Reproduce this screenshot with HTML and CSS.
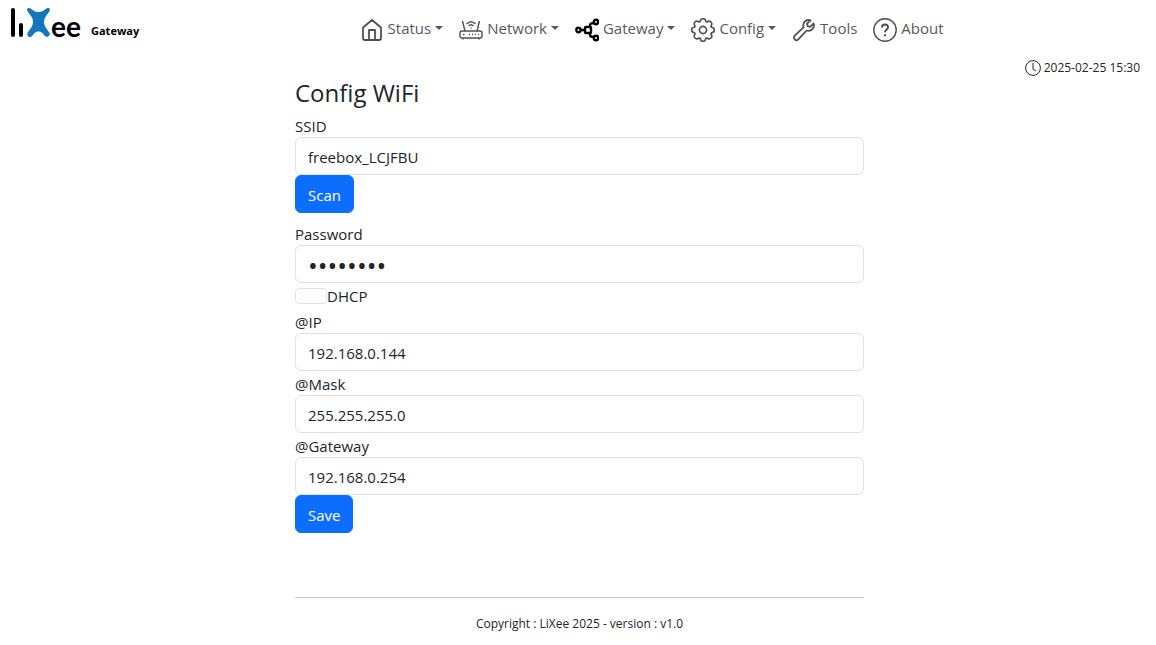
FILE: index.html
```html
<!DOCTYPE html>
<html lang="en">
<head>
<meta charset="utf-8">
<meta name="viewport" content="width=device-width, initial-scale=1">
<title>LiXee Gateway - Config WiFi</title>
<link rel="stylesheet" href="styles.css">
</head>
<body>
<header class="navbar">
  <a class="brand" href="#">
    <svg class="logo" width="76" height="36" viewBox="0 0 76 36" role="img" aria-label="LiXee">
      <path d="M5 3V28M13 18V28" fill="none" stroke="#000" stroke-width="4" stroke-linecap="round"/>
      <path d="M21 1C24 1 25 5 30.500 5C36 5 37 1 40 1C42 1 42.500 3 41 5C38 9 36 11 36 15C36 19 39 22 41.500 26C42.500 28 40 31 37.500 29.500C35 27 34 24.500 30.500 24.500C27 24.500 26 27 23.500 29.500C21 31 18.500 29 19.500 26C22 22 25 19 25 15C25 11 23 9 20 5C18.500 3 19 1 21 1Z" fill="#1277bd"/>
      <text class="logo-text" x="43" y="30">ee</text>
    </svg>
    <span class="brand-name">Gateway</span>
  </a>
  <nav class="menu" aria-label="Main">
    <a class="menu-item" href="#">
      <svg class="icon" viewBox="0 0 24 24"><path d="M3 9.500L12 2L21 9.500V20Q21 22 19 22H5Q3 22 3 20ZM9 22V12H15V22"/></svg>
      <span class="caret">Status</span>
    </a>
    <a class="menu-item" href="#">
      <svg class="icon icon-thin" viewBox="0 0 24 24"><rect x="1" y="13" width="22" height="7" rx="2"/><path d="M6 13L3.500 3M18 13L20.500 3M4 20V21.500M20 20V21.500M7.500 6Q12 1.500 16.500 6M9.500 8Q12 5.500 14.500 8M11.500 10H12.500M4 16.500H5.500M10 16.500H11M13 16.500H14M16 16.500H17M19 16.500H20"/></svg>
      <span class="caret">Network</span>
    </a>
    <a class="menu-item" href="#">
      <svg class="icon icon-bold" viewBox="0 0 24 24"><rect x="10" y="9" width="6" height="6" rx="1"/><circle cx="3.500" cy="12" r="2.200"/><circle cx="21" cy="4" r="2.200"/><circle cx="21" cy="20" r="2.200"/><path d="M6 12H10M15 9V7Q15 5 19 5M15 15V17Q15 19 19 19"/></svg>
      <span class="caret">Gateway</span>
    </a>
    <a class="menu-item" href="#">
      <svg class="icon icon-gear" viewBox="-0.500 -0.500 17 17"><circle cx="8" cy="8" r="2.500"/><path d="M9.796 1.343c-.527-1.79-3.065-1.79-3.592 0l-.094.319a.873.873 0 0 1-1.255.52l-.292-.16c-1.64-.892-3.433.902-2.54 2.541l.159.292a.873.873 0 0 1-.52 1.255l-.319.094c-1.79.527-1.79 3.065 0 3.592l.319.094a.873.873 0 0 1 .52 1.255l-.16.292c-.892 1.64.901 3.434 2.541 2.54l.292-.159a.873.873 0 0 1 1.255.52l.094.319c.527 1.79 3.065 1.79 3.592 0l.094-.319a.873.873 0 0 1 1.255-.52l.292.16c1.64.893 3.434-.902 2.54-2.541l-.159-.292a.873.873 0 0 1 .52-1.255l.319-.094c1.79-.527 1.79-3.065 0-3.592l-.319-.094a.873.873 0 0 1-.52-1.255l.16-.292c.893-1.64-.902-3.433-2.541-2.54l-.292.159a.873.873 0 0 1-1.255-.52z"/></svg>
      <span class="caret">Config</span>
    </a>
    <a class="menu-item" href="#">
      <svg class="icon" viewBox="0 0 24 24"><path d="M18.500 2.400C15.500 1.200 12 3 11.400 6.200C11.200 7.400 11.300 8.300 11.600 9.400L2.700 17.700C1.600 18.800 1.600 20.400 2.700 21.400C3.700 22.400 5.200 22.400 6.300 21.300L14.700 12.500C17.800 13.500 21 11.700 21.800 8.800C22.100 7.600 22 6.500 21.600 5.500L18.200 8.800L15.700 8.200L15.100 5.700Z"/></svg>
      <span>Tools</span>
    </a>
    <a class="menu-item" href="#">
      <svg class="icon icon-thin" viewBox="0 0 24 24"><circle cx="12" cy="12" r="11.200"/><path class="mark" d="M9 9.500Q9 6.500 12 6.500Q15 6.500 15 9.300C15 11.500 12 11.500 12 14.200M12 16.200V18.200"/></svg>
      <span>About</span>
    </a>
  </nav>
</header>
<div class="clock">
  <svg class="clock-icon" viewBox="0 0 16 16"><circle cx="8" cy="8" r="7.400"/><path d="M8 3V9L11 11"/></svg>
  <time datetime="2025-02-25T15:30">2025-02-25 15:30</time>
</div>
<div class="layout">
  <main class="content">
    <h1 class="title">Config WiFi</h1>
    <form class="form">
      <div class="field field-spaced">
        <label class="label" for="ssid">SSID</label>
        <input class="control" id="ssid" type="text" value="freebox_LCJFBU">
        <button class="btn" type="button">Scan</button>
      </div>
      <div class="field">
        <label class="label" for="password">Password</label>
        <input class="control control-password" id="password" type="password" value="password">
      </div>
      <div class="check">
        <input class="check-box" id="dhcp" type="checkbox">
        <label for="dhcp">DHCP</label>
      </div>
      <div class="field">
        <label class="label" for="ip">@IP</label>
        <input class="control" id="ip" type="text" value="192.168.0.144">
      </div>
      <div class="field">
        <label class="label" for="mask">@Mask</label>
        <input class="control" id="mask" type="text" value="255.255.255.0">
      </div>
      <div class="field">
        <label class="label" for="gateway">@Gateway</label>
        <input class="control" id="gateway" type="text" value="192.168.0.254">
        <button class="btn" type="submit">Save</button>
      </div>
    </form>
    <footer class="footer">Copyright : LiXee 2025 - version : v1.0</footer>
  </main>
</div>
</body>
</html>
```
FILE: styles.css
```css
* { box-sizing: border-box; }
body {
  margin: 0;
  color: #212529;
  background: #fff;
  font-family: "Open Sans", "Noto Sans", sans-serif;
  font-size: 15px;
  line-height: 24px;
}
.navbar {
  display: flex;
  align-items: flex-start;
  height: 58px;
  padding: 7px 8px 0;
}
.brand {
  display: flex;
  align-items: center;
  gap: 7px;
  color: #000;
  text-decoration: none;
}
.logo { overflow: visible; }
.logo-text { font-family: Lato, sans-serif; font-size: 28px; font-weight: 700; }
.brand-name { padding-top: 12px; font-size: 11px; font-weight: 700; }
.menu {
  display: flex;
  flex: 1;
  justify-content: center;
  gap: 16px;
  padding: 9px 0 0 16px;
}
.menu-item {
  display: flex;
  align-items: flex-start;
  gap: 4px;
  color: #595959;
  text-decoration: none;
}
.icon {
  width: 24px;
  height: 24px;
  margin-top: 2px;
  fill: none;
  stroke: #505050;
  stroke-width: 1.8;
  stroke-linejoin: round;
}
.icon-thin { stroke-width: 1.4; }
.icon-bold { stroke: #000; stroke-width: 2.4; }
.icon-gear { stroke-width: 1.2; }
.mark { stroke-width: 2; }
.caret::after {
  content: "";
  display: inline-block;
  margin-left: 4px;
  vertical-align: 4px;
  border: 4px solid transparent;
  border-top-color: currentColor;
  border-bottom: 0;
}
.clock {
  display: flex;
  justify-content: flex-end;
  align-items: center;
  gap: 3px;
  height: 20px;
  padding-right: 16px;
  font-size: 12px;
}
.clock-icon { width: 16px; height: 16px; fill: none; stroke: #212529; }
.layout { display: grid; grid-template-columns: 1fr 2fr 1fr; }
.content { grid-column: 2; padding: 0 3px 0 6px; }
.title { margin: 0 0 6px; font-size: 24px; font-weight: 400; line-height: 29px; }
.field { display: flex; flex-direction: column; align-items: flex-start; }
.field-spaced { margin-bottom: 8px; }
.label { padding-top: 2px; line-height: 22px; }
.control {
  width: 100%;
  height: 38px;
  padding: 7px 12px 5px;
  border: 1px solid #dee2e6;
  border-radius: 6px;
  background: #fff;
  color: inherit;
  font: inherit;
}
.control-password { font-size: 26px; }
.btn {
  height: 38px;
  padding: 7px 12px 5px;
  border: 1px solid #0d6efd;
  border-radius: 6px;
  background: #0d6efd;
  color: #fff;
  font: inherit;
}
.check { display: flex; align-items: center; height: 26px; }
.check-box {
  appearance: none;
  width: 32px;
  height: 16px;
  margin: 0;
  border: 1px solid #dee2e6;
  border-radius: 4px;
}
.footer {
  margin-top: 64px;
  padding-top: 14px;
  border-top: 1px solid #c8c9ca;
  font-size: 12px;
  text-align: center;
}
```
